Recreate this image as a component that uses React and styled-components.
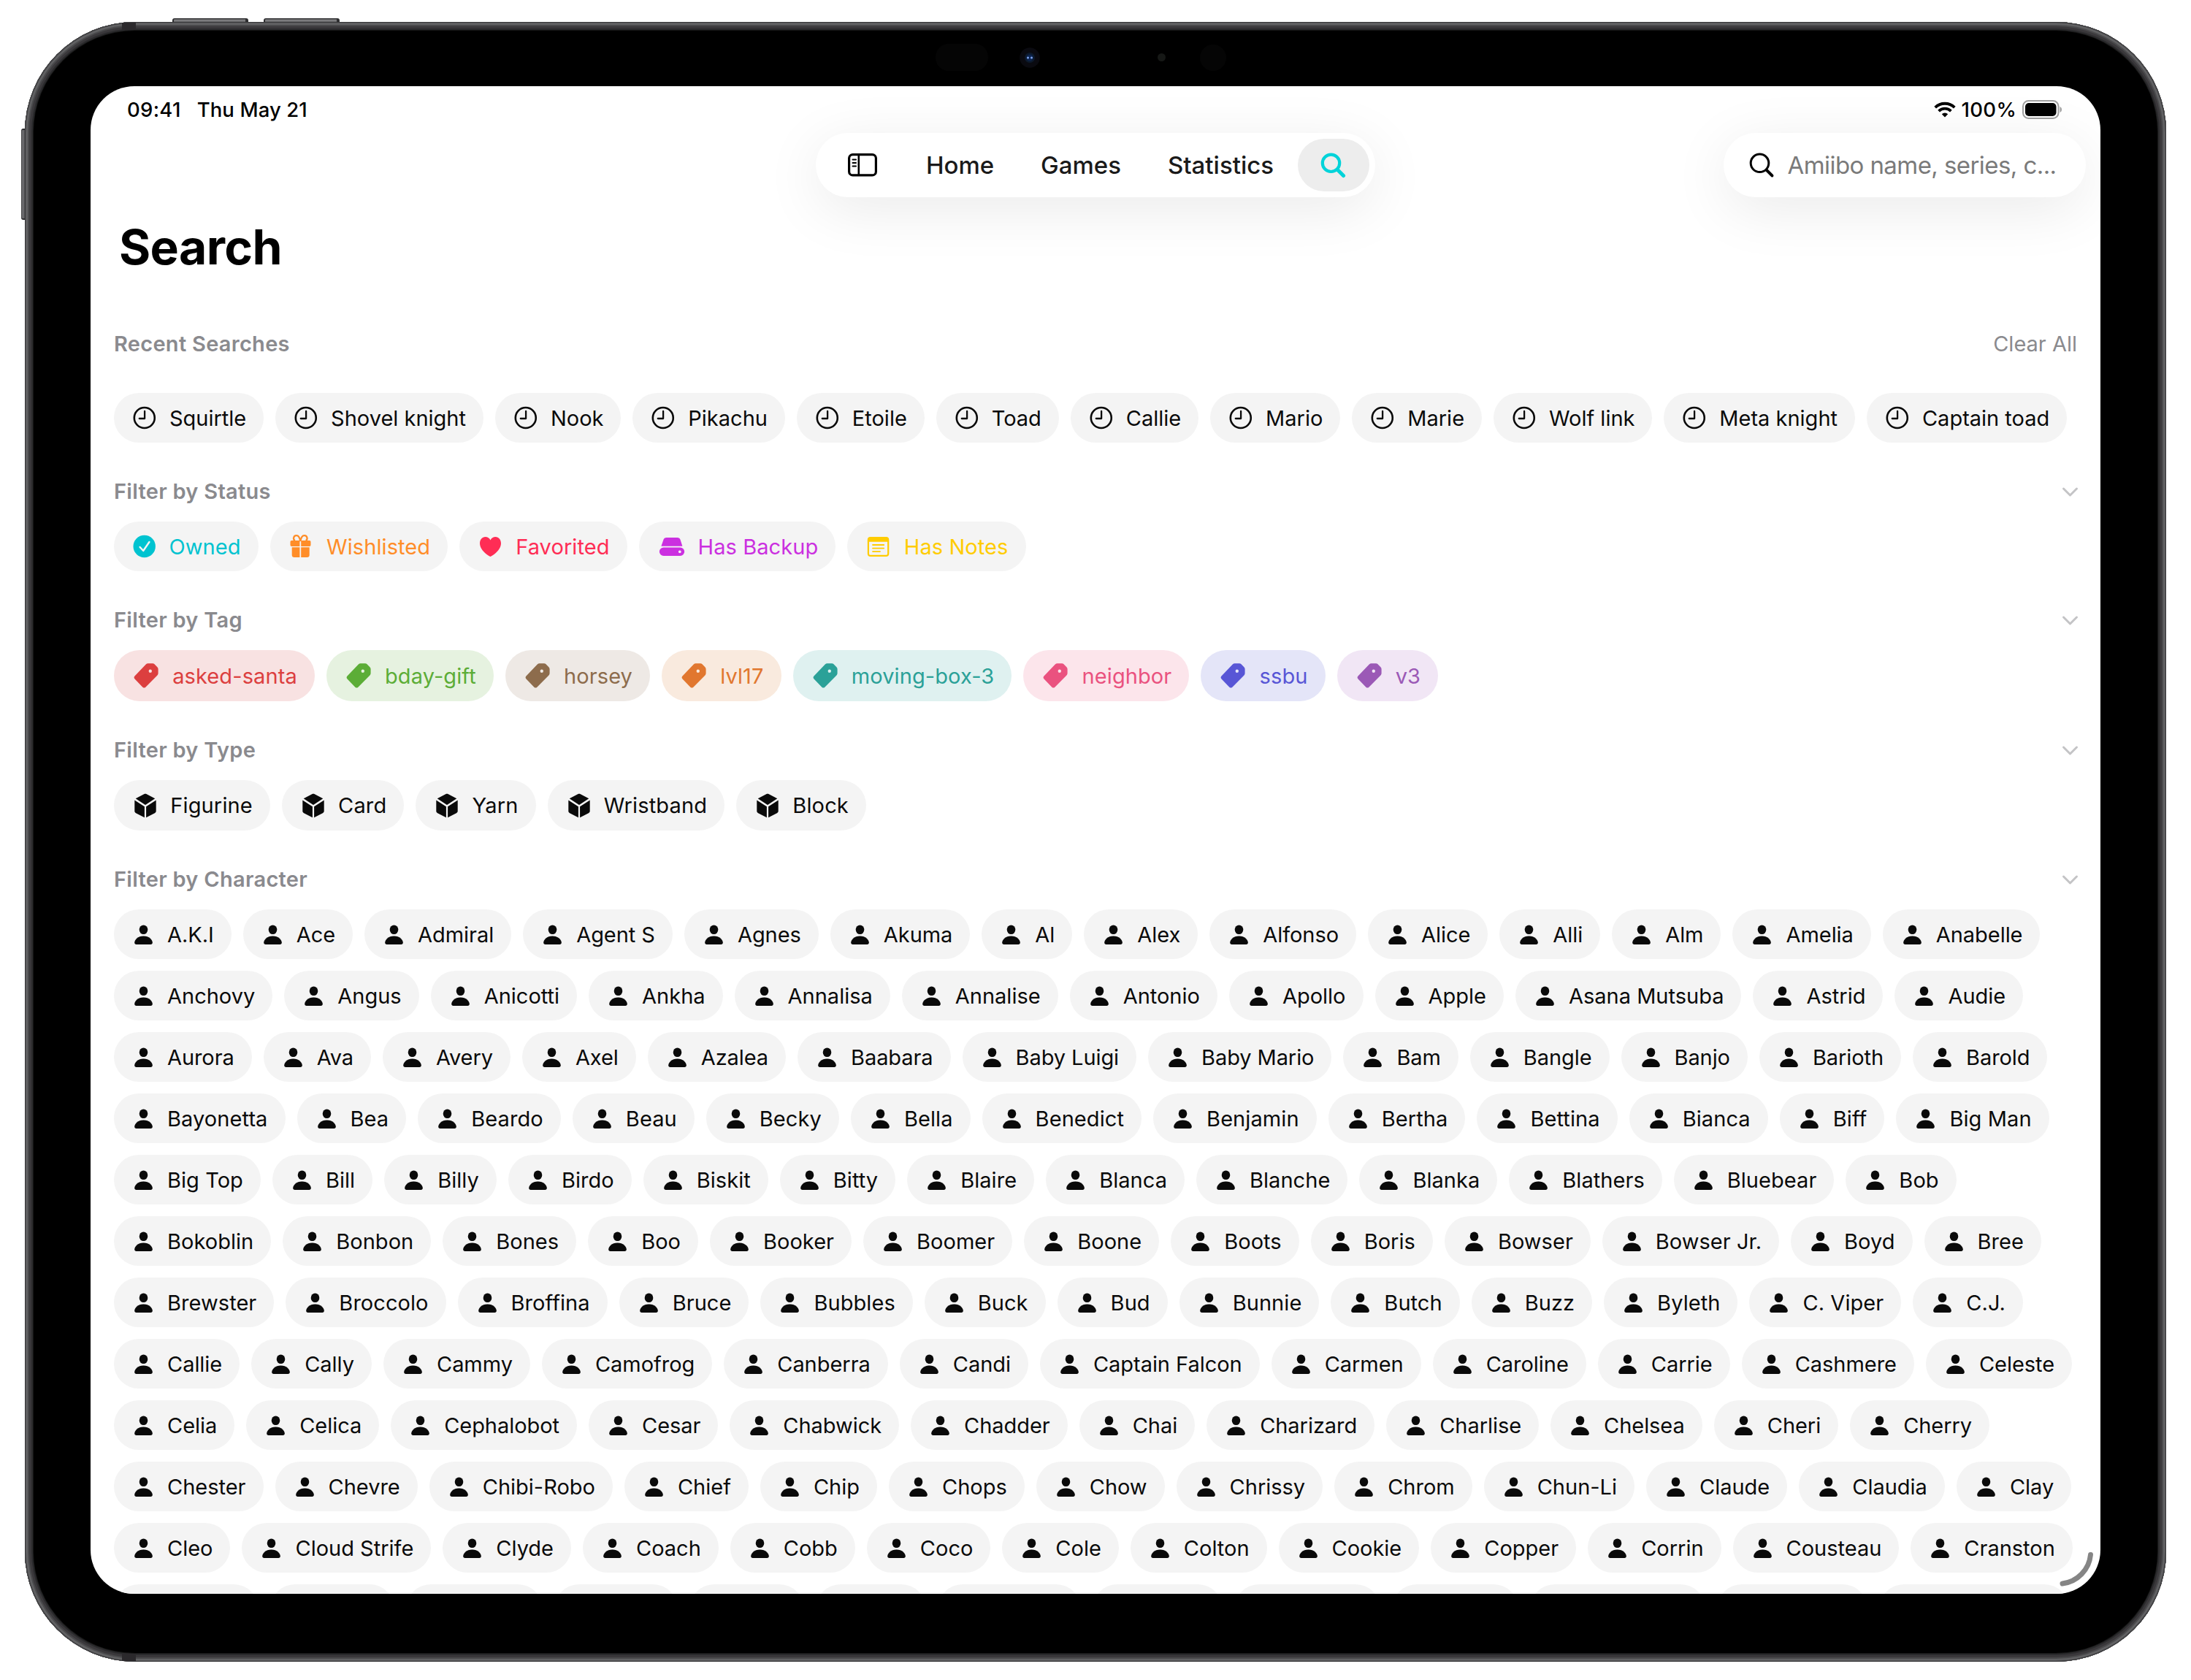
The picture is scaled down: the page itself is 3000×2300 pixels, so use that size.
import React from "react";
import styled, { createGlobalStyle } from "styled-components";

const GlobalStyle = createGlobalStyle`
  * {
    box-sizing: border-box;
  }
  body {
    margin: 0;
    background: #fff;
    font-family: Inter, "Liberation Sans", sans-serif;
    color: #0a0a0a;
  }
`;

/* ---------- device ---------- */

const Page = styled.div`
  width: 3000px;
  height: 2300px;
  padding: 30px 34px 25px;
  overflow: hidden;
`;

const Device = styled.div`
  position: relative;
  width: 2932px;
  height: 2245px;
  padding: 88px 90px 93px;
  border-radius: 151px;
  background: #000;
  box-shadow: inset 0 0 0 1px #3a3a3c, inset 0 0 0 2px #58585a,
    inset 0 0 0 4px #626264, inset 0 0 0 6px #4a4a4c, inset 0 0 0 9px #3a383b,
    inset 0 0 0 11px #2a2a2c, inset 0 0 0 12px #161616;
`;

const TopButton = styled.div`
  position: absolute;
  top: -5px;
  left: ${(p) => p.$left}px;
  width: 104px;
  height: 5px;
  border-radius: 3px 3px 0 0;
  background: linear-gradient(#4a4a4c, #8a8a8c 50%, #5a5a5c);
  border: solid #2e2e30;
  border-width: 1px 4px 0 2px;
`;

const SideButton = styled.div`
  position: absolute;
  top: 146px;
  left: -5px;
  width: 5px;
  height: 125px;
  border-radius: 3px 0 0 3px;
  background: linear-gradient(90deg, #3a3a3c, #77777a 45%, #4a4a4c);
  border: solid #2e2e30;
  border-width: 2px 0;
`;

const AntennaBand = styled.div`
  position: absolute;
  left: 133px;
  ${(p) => (p.$bottom ? "bottom: 1px;" : "top: 1px;")}
  width: 19px;
  height: 10px;
  background: #2b292c;
`;

const Sensors = styled.div`
  position: absolute;
  top: 30px;
  left: 1247px;
  height: 37px;
  display: flex;
  align-items: center;
`;

const Sensor = styled.div`
  width: ${(p) => p.$w}px;
  height: ${(p) => p.$h}px;
  margin-right: ${(p) => p.$gap || 0}px;
  border-radius: 18px;
  background: ${(p) => p.$color || "#050505"};
`;

const Camera = styled.svg`
  width: 28px;
  height: 28px;
  margin-right: 161px;
`;

const Screen = styled.div`
  position: relative;
  width: 2752px;
  height: 2064px;
  border-radius: 60px;
  background: #fff;
  overflow: hidden;
`;

const ResizeHandle = styled.svg`
  position: absolute;
  right: 8px;
  bottom: 8px;
  width: 52px;
  height: 52px;
`;

/* ---------- header ---------- */

const StatusBar = styled.div`
  display: flex;
  align-items: center;
  justify-content: space-between;
  height: 64px;
  padding: 0 51px 0 50px;
  font-size: 27.5px;
  font-weight: 500;
  letter-spacing: 0.3px;
  color: #000;
`;

const StatusGroup = styled.div`
  display: flex;
  align-items: center;
  gap: ${(p) => p.$gap}px;
`;

const StatusDate = styled.span`
  letter-spacing: 0.1px;
`;

const Toolbar = styled.div`
  display: grid;
  grid-template-columns: 1fr 766px 1fr;
  height: 88px;
  padding-right: 20px;
  margin-left: 20px;
`;

const TabBar = styled.nav`
  grid-column: 2;
  display: flex;
  align-items: center;
  justify-content: space-between;
  height: 88px;
  padding: 8px;
  border-radius: 44px;
  background: #fff;
  box-shadow: 0 16px 80px rgba(0, 0, 0, 0.085);
`;

const Tab = styled.div`
  display: flex;
  align-items: center;
  height: 72px;
  padding: 0 31px;
  font-size: 33px;
  font-weight: 500;
  color: #1a1a1a;
`;

const SidebarTab = styled(Tab)`
  padding: 0 33px 0 36px;
`;

const ActiveTab = styled(Tab)`
  justify-content: center;
  width: 98px;
  padding: 0 2px 0 0;
  border-radius: 36px;
  background: #ededed;
`;

const SearchField = styled.div`
  justify-self: end;
  display: flex;
  align-items: center;
  width: 496px;
  height: 88px;
  padding-left: 34px;
  gap: 17.5px;
  border-radius: 44px;
  background: #fff;
  box-shadow: 0 16px 80px rgba(0, 0, 0, 0.085);
  font-size: 33px;
  letter-spacing: -0.57px;
  color: #7a7a7a;
  white-space: nowrap;
`;

const Title = styled.h1`
  display: flex;
  align-items: center;
  height: 133px;
  margin: 0;
  padding: 3px 0 0 39px;
  font-size: 66px;
  font-weight: 700;
  letter-spacing: -0.6px;
  color: #000;
`;

/* ---------- sections ---------- */

const SectionHeader = styled.div`
  display: flex;
  align-items: center;
  justify-content: space-between;
  height: ${(p) => (p.$tall ? 135 : 108)}px;
  padding: ${(p) => (p.$tall ? 0 : 25)}px 32px 0 32px;
  font-size: 29px;
  color: #8a8a8e;
`;

const SectionTitle = styled.h2`
  margin: 0;
  font-size: 29px;
  font-weight: 600;
  letter-spacing: 0.28px;
  color: #8a8a8e;
`;

const Chevron = styled.svg`
  width: 25px;
  height: 17px;
  margin: 2px -3px 0 0;
`;

const ChipRow = styled.div`
  display: flex;
  gap: 16px;
  padding-left: 32px;
  margin-bottom: ${(p) => p.$mb || 0}px;
  letter-spacing: ${(p) => p.$spacing || 0}px;
`;

const Chip = styled.div`
  flex: none;
  display: flex;
  align-items: center;
  gap: 16px;
  height: ${(p) => p.$h || 68}px;
  width: ${(p) => (p.$w ? `${p.$w}px` : "auto")};
  padding: 0 24px;
  border-radius: 35px;
  font-size: 29px;
  white-space: nowrap;
  color: ${(p) => p.$color || "#0a0a0a"};
  background: ${(p) => p.$bg || "#f4f4f4"};
`;

const Glyph = styled.svg`
  flex: none;
  height: 44px;
`;

/* ---------- icons ---------- */

const ClockIcon = () => (
  <Glyph width="35.9" viewBox="0 0 35.9 44" fill="none" stroke="currentColor" strokeWidth="2.6" strokeLinecap="round" strokeLinejoin="round">
    <circle cx="17.8" cy="22" r="14" />
    <path d="M18.1 13v10h-7.3" strokeWidth="2.3" />
  </Glyph>
);

const CheckIcon = () => (
  <Glyph width="35.5" viewBox="0 0 35.5 44">
    <circle cx="17.7" cy="22" r="15.2" fill="currentColor" />
    <path d="M11.6 23l4.6 5 8.2-12" fill="none" stroke="#f4f4f4" strokeWidth="2.4" strokeLinecap="round" strokeLinejoin="round" />
  </Glyph>
);

const GiftIcon = () => (
  <Glyph width="37.5" viewBox="0 0 37.5 44" fill="currentColor">
    <path d="M16.4 14v8H5.3a1.8 1.8 0 0 1-1.8-1.8v-4.4A1.8 1.8 0 0 1 5.3 14zM18.2 14h11.5a1.8 1.8 0 0 1 1.8 1.8v4.4a1.8 1.8 0 0 1-1.8 1.8H18.2z" />
    <path d="M16.4 23.2V37H9a3.3 3.3 0 0 1-3.3-3.3V23.2zM18.2 23.2h11.5v10.5a3.3 3.3 0 0 1-3.3 3.3h-8.2z" />
    <path d="M17.3 15c-1-5-2.5-7.8-5-7.8a3.7 3.7 0 0 0-2.5 6.8M17.3 15c1-5 2.5-7.8 5-7.8a3.7 3.7 0 0 1 2.5 6.8" fill="none" stroke="currentColor" strokeWidth="2.3" />
  </Glyph>
);

const HeartIcon = () => (
  <Glyph width="37" viewBox="0 0 37 44" fill="currentColor">
    <path d="M18.5 36C15.5 35 4 27.5 4 17.8 4 12.6 7.3 9 11.500 9c3.200 0 5.700 1.700 7 4.400C19.800 10.700 22.300 9 25.500 9c4.200 0 7.500 3.600 7.500 8.800C33 27.500 21.500 35 18.500 36z" />
  </Glyph>
);

const DriveIcon = () => (
  <Glyph width="41" viewBox="0 0 41 44" fill="currentColor">
    <path d="M13.500 10h15c2 0 3.300.9 4 2.800l2.900 8.900H6.400l3.100-8.900c.7-1.900 2-2.800 4-2.800z" />
    <path fillRule="evenodd" d="M9.600 23.500h22.800a5.700 5.700 0 0 1 0 11.500H9.600a5.700 5.700 0 0 1 0-11.500zM31.800 27.400a1.900 1.900 0 1 0 0 3.800 1.900 1.900 0 0 0 0-3.800z" />
  </Glyph>
);

const NotesIcon = () => (
  <Glyph width="37.5" viewBox="0 0 37.5 44" fill="none" stroke="currentColor">
    <rect x="4.9" y="10.1" width="27.3" height="24.8" rx="3" strokeWidth="2.2" />
    <path d="M4.500 12.500a3 3 0 0 1 3-3h22a3 3 0 0 1 3 3v3.200h-28z" fill="currentColor" stroke="none" />
    <path d="M11 20h15.200M11 24.600h15.200M11 29.100h10" strokeWidth="1.8" strokeLinecap="round" />
  </Glyph>
);

const TagIcon = () => (
  <Glyph width="40.2" viewBox="0 0 40.2 44" fill="currentColor">
    <path
      fillRule="evenodd"
      d="M22.800 5.300h6.200c1 0 1.800.3 2.500 1l4.100 4.100c.7.700 1 1.500 1 2.500v5.700c0 1.100-.3 2-1.100 2.800L19.400 37.700c-1.300 1.200-2.800 1.200-4.100 0L4.500 26.400c-1.200-1.300-1.200-2.800 0-4L19.800 6.500c.8-.8 1.800-1.200 3-1.200zM25.800 13.500a2.200 2.200 0 1 0 0 4.400 2.200 2.200 0 0 0 0-4.400z"
    />
  </Glyph>
);

const CubeIcon = () => (
  <Glyph width="37.2" viewBox="0 0 37.2 44" fill="currentColor">
    <path d="M17.600 6c.9-.5 1.900-.5 2.800 0l11.900 6.300L19 20.900 5.700 12.300z" />
    <path d="M4.300 14.400l13.600 8.800v15.100L5.700 31.900c-.9-.5-1.400-1.300-1.400-2.300zM33.700 14.400l-13.600 8.800v15.100l12.200-6.400c.9-.5 1.400-1.300 1.400-2.300z" />
  </Glyph>
);

const PersonIcon = () => (
  <Glyph width="33" viewBox="0 0 33 44" fill="currentColor">
    <ellipse cx="16.500" cy="15.800" rx="5.800" ry="6.300" />
    <path d="M6.700 36c-1.600 0-2.500-.9-2.500-2.400 0-4 4.600-9.100 12.300-9.100s12.300 5.100 12.300 9.100c0 1.500-.9 2.400-2.500 2.400z" />
  </Glyph>
);

const SearchIcon = ({ color, weight }) => (
  <svg width="36" height="36" viewBox="0 0 36 36" fill="none" stroke={color} strokeLinecap="round">
    <circle cx="15.500" cy="15.300" r={13.8 - weight / 2} strokeWidth={weight} />
    <path d="M25 25l7.500 7.500" strokeWidth={weight + 0.9} />
  </svg>
);

const SidebarIcon = () => (
  <svg width="41" height="32" viewBox="0 0 41 32" fill="none" stroke="#000">
    <rect x="1.600" y="1.600" width="36.800" height="28.300" rx="5" strokeWidth="3.200" />
    <path d="M14.800 2v28" strokeWidth="2.600" />
    <path d="M6.500 8.500h4.500M6.500 13h4.500M6.500 17.500h4.500" strokeWidth="2" strokeLinecap="round" />
  </svg>
);

const WifiIcon = () => (
  <svg width="30" height="22" viewBox="0 0 30 22" fill="none" stroke="#000" strokeWidth="3.8">
    <path d="M1.700 8.200a19 19 0 0 1 26.600 0" />
    <path d="M6.600 13.100a12 12 0 0 1 16.800 0" />
    <path d="M10.800 17.200a6.200 6.200 0 0 1 8.400 0L15 21.500z" fill="#000" stroke="none" />
  </svg>
);

const BatteryIcon = () => (
  <svg width="56" height="26" viewBox="0 0 56 26">
    <rect x="1" y="1" width="48.500" height="24" rx="7.500" fill="none" stroke="#a0a0a0" strokeWidth="2" />
    <rect x="4" y="4" width="42.500" height="18" rx="5" fill="#000" />
    <path d="M51.500 9v8c3.300-1.200 3.300-6.800 0-8z" fill="#a0a0a0" />
  </svg>
);

/* ---------- data ---------- */

const recent = ["Squirtle", "Shovel knight", "Nook", "Pikachu", "Etoile", "Toad", "Callie", "Mario", "Marie", "Wolf link", "Meta knight", "Captain toad"];

const statuses = [
  { name: "Owned", color: "#00c3d0", icon: CheckIcon },
  { name: "Wishlisted", color: "#ff8d28", icon: GiftIcon },
  { name: "Favorited", color: "#ff2d55", icon: HeartIcon },
  { name: "Has Backup", color: "#cb30e0", icon: DriveIcon },
  { name: "Has Notes", color: "#ffcc00", icon: NotesIcon },
];

const tags = [
  { name: "asked-santa", color: "#dc3f3f", bg: "#f8e2e2" },
  { name: "bday-gift", color: "#5cad37", bg: "#e6f2e0" },
  { name: "horsey", color: "#8d6c4c", bg: "#eee9e5" },
  { name: "lvl17", color: "#e1772f", bg: "#f9eade" },
  { name: "moving-box-3", color: "#2ba198", bg: "#dff1f0" },
  { name: "neighbor", color: "#ea527f", bg: "#fce5eb" },
  { name: "ssbu", color: "#5856d6", bg: "#e4e5f8" },
  { name: "v3", color: "#9b59b6", bg: "#f1e6f5" },
];

const types = ["Figurine", "Card", "Yarn", "Wristband", "Block"];

const characters = [
  { spacing: -0.05, names: ["A.K.I", "Ace", "Admiral", "Agent S", "Agnes", "Akuma", "Al", "Alex", "Alfonso", "Alice", "Alli", "Alm", "Amelia", "Anabelle"] },
  { spacing: 0, names: ["Anchovy", "Angus", "Anicotti", "Ankha", "Annalisa", "Annalise", "Antonio", "Apollo", "Apple", "Asana Mutsuba", "Astrid", "Audie"] },
  { spacing: -0.08, names: ["Aurora", "Ava", "Avery", "Axel", "Azalea", "Baabara", "Baby Luigi", "Baby Mario", "Bam", "Bangle", "Banjo", "Barioth", "Barold"] },
  { spacing: 0.09, names: ["Bayonetta", "Bea", "Beardo", "Beau", "Becky", "Bella", "Benedict", "Benjamin", "Bertha", "Bettina", "Bianca", "Biff", "Big Man"] },
  { spacing: 0.05, names: ["Big Top", "Bill", "Billy", "Birdo", "Biskit", "Bitty", "Blaire", "Blanca", "Blanche", "Blanka", "Blathers", "Bluebear", "Bob"] },
  { spacing: 0.035, names: ["Bokoblin", "Bonbon", "Bones", "Boo", "Booker", "Boomer", "Boone", "Boots", "Boris", "Bowser", "Bowser Jr.", "Boyd", "Bree"] },
  { spacing: 0.06, names: ["Brewster", "Broccolo", "Broffina", "Bruce", "Bubbles", "Buck", "Bud", "Bunnie", "Butch", "Buzz", "Byleth", "C. Viper", "C.J."] },
  { spacing: -0.04, names: ["Callie", "Cally", "Cammy", "Camofrog", "Canberra", "Candi", "Captain Falcon", "Carmen", "Caroline", "Carrie", "Cashmere", "Celeste"] },
  { spacing: -0.05, names: ["Celia", "Celica", "Cephalobot", "Cesar", "Chabwick", "Chadder", "Chai", "Charizard", "Charlise", "Chelsea", "Cheri", "Cherry"] },
  { spacing: -0.01, names: ["Chester", "Chevre", "Chibi-Robo", "Chief", "Chip", "Chops", "Chow", "Chrissy", "Chrom", "Chun-Li", "Claude", "Claudia", "Clay"] },
  { spacing: -0.01, names: ["Cleo", "Cloud Strife", "Clyde", "Coach", "Cobb", "Coco", "Cole", "Colton", "Cookie", "Copper", "Corrin", "Cousteau", "Cranston"] },
];

// the row cut off by the bottom of the screen, only the tops of its chips show
const cutOffRow = [198, 170, 187, 169, 156.5, 151.5, 196, 178, 200, 173, 240, 206, 260];

/* ---------- page ---------- */

function FilterHeader({ children }) {
  return (
    <SectionHeader>
      <SectionTitle>{children}</SectionTitle>
      <Chevron viewBox="0 0 25 17">
        <path d="M3.500 4l9 9 9-9" fill="none" stroke="#c4c4c6" strokeWidth="3" strokeLinecap="round" strokeLinejoin="round" />
      </Chevron>
    </SectionHeader>
  );
}

function App() {
  return (
    <Page>
      <GlobalStyle />
      <Device>
        <TopButton $left={202} />
        <TopButton $left={327} />
        <SideButton />
        <AntennaBand />
        <AntennaBand $bottom />
        <Sensors>
          <Sensor $w={72} $h={37} $gap={43} />
          <Camera viewBox="0 0 28 28">
            <circle cx="14" cy="14" r="13.8" fill="#0a0a10" />
            <circle cx="14" cy="14" r="7" fill="#0d1a2c" />
            <circle cx="14" cy="14" r="4.500" fill="#0c2450" />
            <circle cx="11.500" cy="14" r="1.500" fill="#7fa4ee" />
            <circle cx="16.500" cy="14" r="1.500" fill="#7fa4ee" />
          </Camera>
          <Sensor $w={11} $h={11} $gap={47} $color="#161816" />
          <Sensor $w={36} $h={36} />
        </Sensors>

        <Screen>
          <StatusBar>
            <StatusGroup $gap={22}>
              <span>09:41</span>
              <StatusDate>Thu May 21</StatusDate>
            </StatusGroup>
            <StatusGroup $gap={8}>
              <WifiIcon />
              <span>100%</span>
              <BatteryIcon />
            </StatusGroup>
          </StatusBar>

          <Toolbar>
            <TabBar>
              <SidebarTab>
                <SidebarIcon />
              </SidebarTab>
              <Tab>Home</Tab>
              <Tab>Games</Tab>
              <Tab>Statistics</Tab>
              <ActiveTab>
                <SearchIcon color="#00d3d9" weight={4.2} />
              </ActiveTab>
            </TabBar>
            <SearchField>
              <SearchIcon color="#000" weight={3} />
              Amiibo name, series, c...
            </SearchField>
          </Toolbar>

          <Title>Search</Title>

          <SectionHeader $tall>
            <SectionTitle>Recent Searches</SectionTitle>
            <span>Clear All</span>
          </SectionHeader>
          <ChipRow>
            {recent.map((name) => (
              <Chip key={name}>
                <ClockIcon />
                {name}
              </Chip>
            ))}
          </ChipRow>

          <FilterHeader>Filter by Status</FilterHeader>
          <ChipRow $spacing={0.08}>
            {statuses.map(({ name, color, icon: Icon }) => (
              <Chip key={name} $color={color}>
                <Icon />
                {name}
              </Chip>
            ))}
          </ChipRow>

          <FilterHeader>Filter by Tag</FilterHeader>
          <ChipRow $spacing={0.1}>
            {tags.map(({ name, color, bg }) => (
              <Chip key={name} $color={color} $bg={bg} $h={70}>
                <TagIcon />
                {name}
              </Chip>
            ))}
          </ChipRow>

          <FilterHeader>Filter by Type</FilterHeader>
          <ChipRow $spacing={0.15}>
            {types.map((name) => (
              <Chip key={name} $h={69}>
                <CubeIcon />
                {name}
              </Chip>
            ))}
          </ChipRow>

          <FilterHeader>Filter by Character</FilterHeader>
          {characters.map(({ spacing, names }) => (
            <ChipRow key={names[0]} $spacing={spacing} $mb={16}>
              {names.map((name) => (
                <Chip key={name}>
                  <PersonIcon />
                  {name}
                </Chip>
              ))}
            </ChipRow>
          ))}
          <ChipRow>
            {cutOffRow.map((width, i) => (
              <Chip key={i} $w={width} />
            ))}
          </ChipRow>

          <ResizeHandle viewBox="0 0 52 52" fill="none" stroke="#858585" strokeWidth="7" strokeLinecap="round">
            <path d="M46.500 6.500A44 44 0 0 1 8 46" />
          </ResizeHandle>
        </Screen>
      </Device>
    </Page>
  );
}

export default App;
